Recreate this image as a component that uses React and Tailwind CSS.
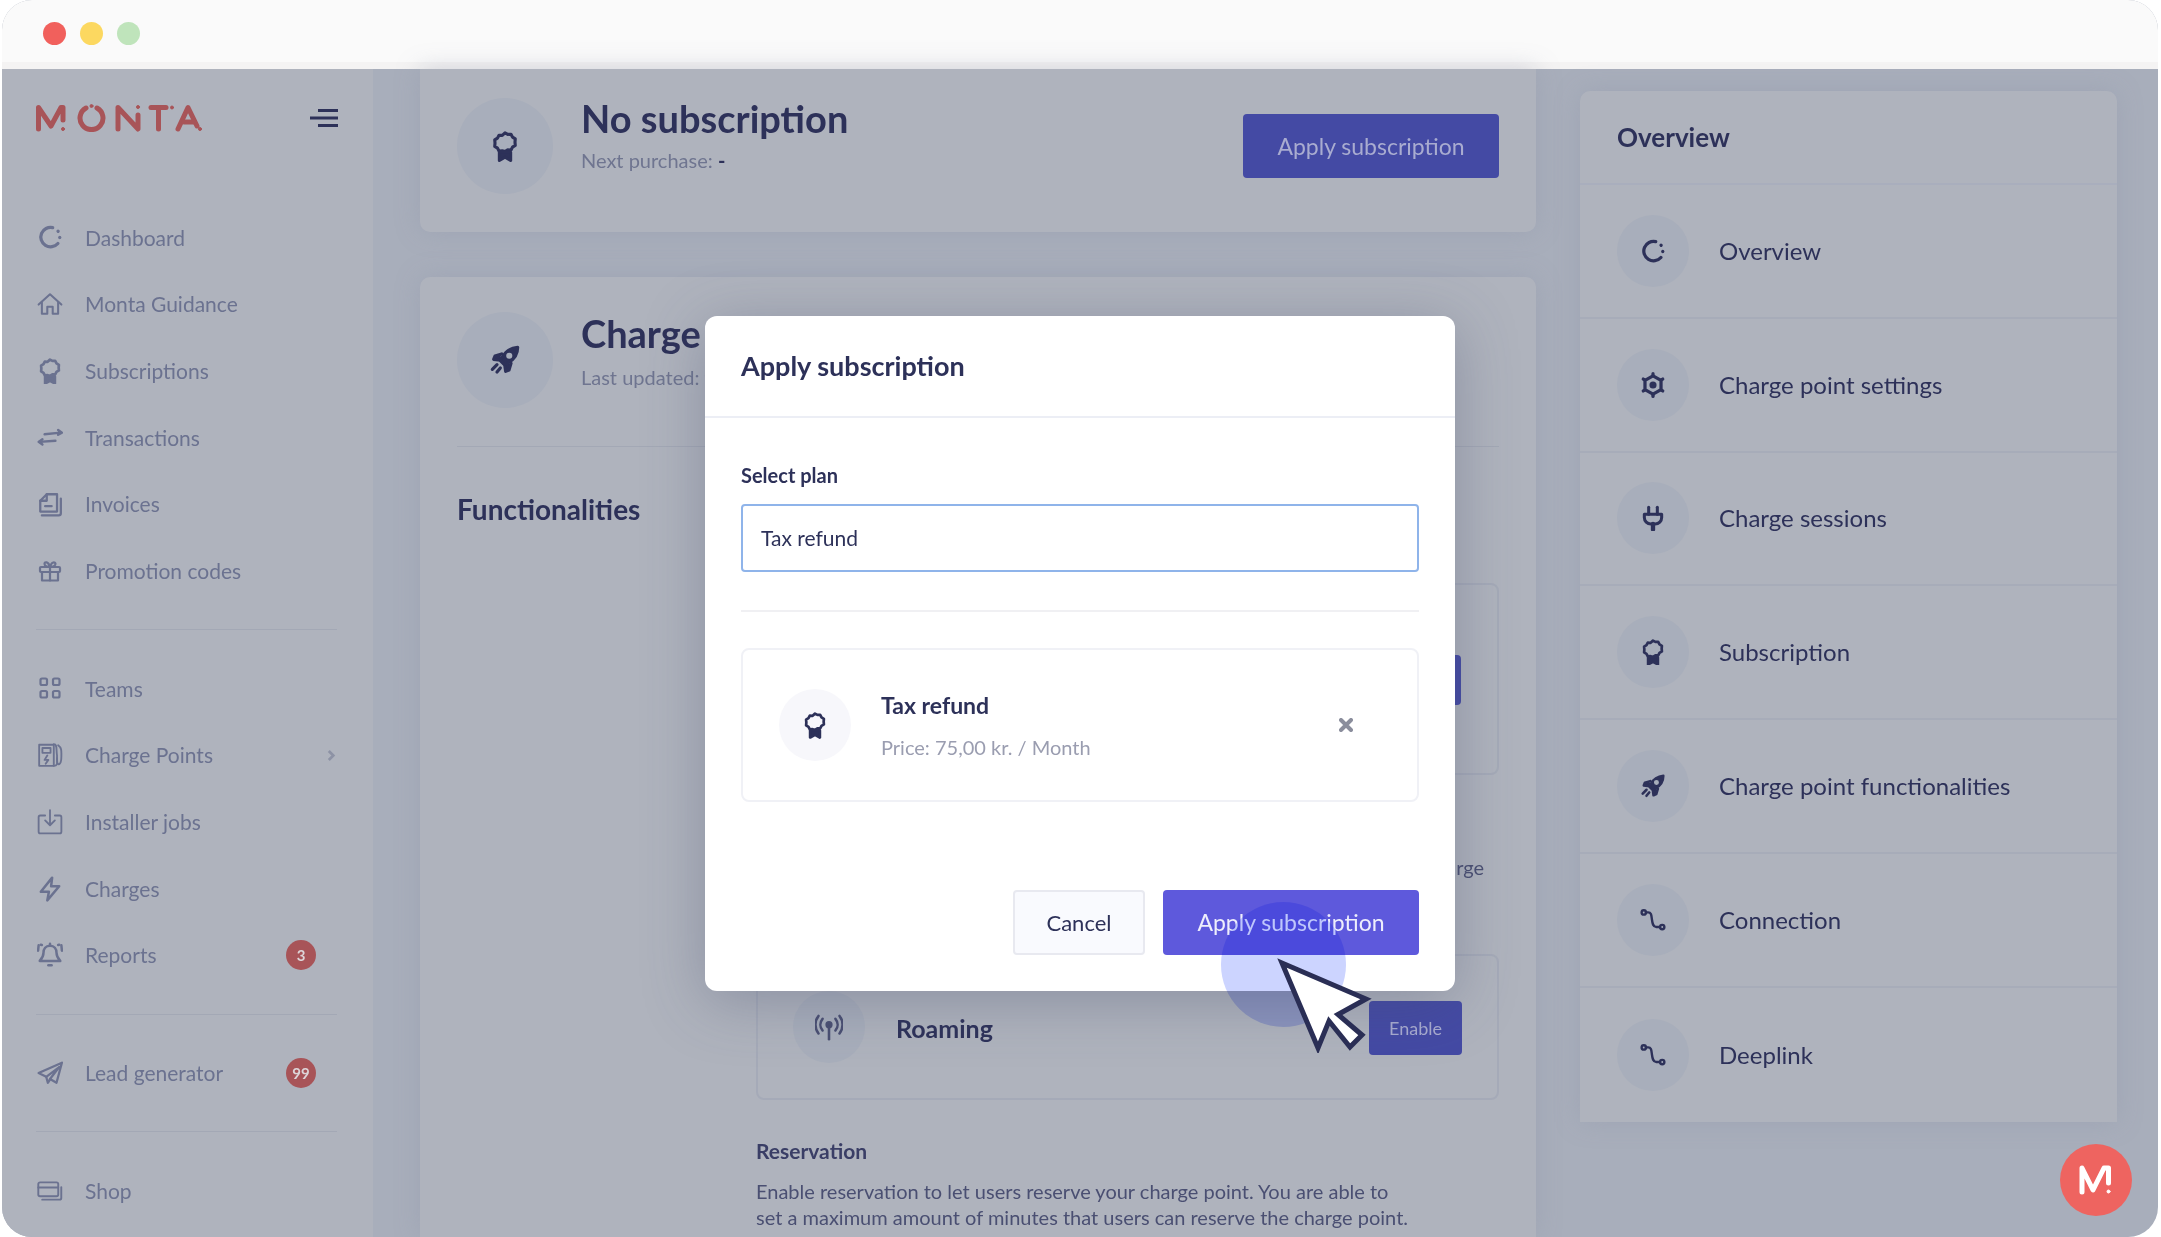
import React from "react";

const Svg = ({ className = "w-7 h-7", children, sw = 2.4, vb = "0 0 24 24" }) => (
  <svg viewBox={vb} className={className} fill="none" stroke="currentColor" strokeWidth={sw} strokeLinecap="round" strokeLinejoin="round">
    {children}
  </svg>
);

const DashIcon = (p) => (
  <Svg {...p} sw={3}>
    <path d="M14.5 3.3A9 9 0 1 0 19.3 18" />
    <path d="M19.4 6.6l.1.1" />
    <path d="M21 12.4v.1" />
  </Svg>
);
const HouseIcon = (p) => (
  <Svg {...p} sw={1.9}>
    <path d="M1.5 12.5 12 3l10.5 9.5" />
    <path d="M4.5 10.5V21h5v-6.5h5V21h5V10.5" />
  </Svg>
);
const BadgeIcon = (p) => (
  <Svg {...p} sw={2.5}>
    <path d="M12 2l2.2 1.2 2.6-.1 1.2 2.3 2.2 1.4-.2 2.6.2 2.6-2.2 1.4-1.2 2.3-2.6-.1L12 17l-2.2-.6-2.6.1L6 14.200l-2.200-1.400.2-2.600-.2-2.600L6 6.200l1.200-2.300 2.600.1z" transform="translate(0 -0.500)" />
    <path d="M7.500 17v6.500l4.500-2.500 4.500 2.500V17z" fill="currentColor" />
  </Svg>
);
const ArrowsIcon = (p) => (
  <Svg {...p} sw={2.2}>
    <path d="M7 9.500l15-1.500" />
    <path d="M19.500 5.500 23 8l-3.500 2" fill="currentColor" />
    <path d="M17 15.500 2 16.500" />
    <path d="M5 14 1.500 16.500 5 19" fill="currentColor" />
  </Svg>
);
const InvoiceIcon = (p) => (
  <Svg {...p} sw={2.100}>
    <path d="M3 17V9l6-6h9.500v16H3z" />
    <path d="M9 3v6H3" />
    <path d="M7.500 14h6" />
    <path d="M22 7v13.500a2 2 0 0 1-2 2H4.500" />
  </Svg>
);
const GiftIcon = (p) => (
  <Svg {...p} sw={2.200}>
    <rect x="2" y="8" width="20" height="5" rx="1" />
    <path d="M4 13v8.500h16V13" />
    <path d="M12 8v13.500" />
    <path d="M12 8C9 8 6.500 7 6.500 4.800S10.500 2 12 8c1.500-6 5.500-5 5.500-3.200S15 8 12 8z" />
  </Svg>
);
const GridIcon = (p) => (
  <Svg {...p} sw={2.200}>
    <rect x="2.500" y="2.500" width="6.500" height="6.500" rx="1.500" />
    <rect x="15" y="2.500" width="6.500" height="6.500" rx="1.500" />
    <rect x="2.500" y="15" width="6.500" height="6.500" rx="1.500" />
    <rect x="15" y="15" width="6.500" height="6.500" rx="1.500" />
  </Svg>
);
const PumpIcon = (p) => (
  <Svg {...p} sw={1.700}>
    <path d="M2 22V2.500h13.500V22z" />
    <rect x="5" y="5.500" width="7.500" height="4.500" />
    <path d="M9.500 12.500 7 16.500h3.500L8 20" />
    <path d="M15.500 2c3.500 0 2 5 3 10.500 0 3-.5 8 1.500 8s2.500-3 2.500-7.500S23 5.500 19.500 3" />
    <path d="M18.500 15c0 4 1 7-3 7" />
  </Svg>
);
const InstallIcon = (p) => (
  <Svg {...p} sw={1.700}>
    <path d="M7.500 6H3a1.500 1.500 0 0 0-1.500 1.500V21A1.500 1.500 0 0 0 3 22.500h18a1.500 1.500 0 0 0 1.500-1.500V7.500A1.500 1.500 0 0 0 21 6h-4.500" />
    <path d="M12 1v13" />
    <path d="M7.500 10.500 12 15l4.500-4.500" />
  </Svg>
);
const BoltIcon = (p) => (
  <Svg {...p} sw={2.300}>
    <path d="M14 1.500 3.500 14.500H11L9.500 22.500 20.500 9.500H13z" />
  </Svg>
);
const BellIcon = (p) => (
  <Svg {...p} sw={2.300}>
    <path d="M12 3.500c-4 0-6 3-6 6.500 0 4-1.500 5.500-3.500 7.500h19c-2-2-3.500-3.500-3.500-7.500 0-3.500-2-6.500-6-6.500z" />
    <path d="M12 1.500v2" />
    <path d="M10.500 21.500h3" />
    <path d="M1.500 3 1 8" />
    <path d="M22.500 3l.5 5" />
    <path d="M3.500 2.500l1 .2" />
    <path d="M20.500 2.500l-1 .2" />
  </Svg>
);
const SendIcon = (p) => (
  <Svg {...p} sw={2.100}>
    <path d="M23 2.500 1.500 12l7 3.500 12-9-8.500 11 6 3.500z" />
    <path d="M8.500 15.500 10 21l2-3" />
  </Svg>
);
const ShopIcon = (p) => (
  <Svg {...p} sw={2.200} vb="0 0 30 24">
    <rect x="1.500" y="2" width="23" height="16" rx="2" />
    <path d="M1.500 8h23" />
    <path d="M28 7.500V20a2 2 0 0 1-2 2H6" />
  </Svg>
);
const RocketIcon = (p) => (
  <Svg {...p} sw={2.400}>
    <path d="M21.500 2.500c-5 .5-9 3-11.500 7.500L7 11l6 6 1.500-3c4.500-2.500 7-6.500 7-11.500z" fill="currentColor" />
    <circle cx="15.200" cy="8.800" r="1.100" stroke="#a8aebb" fill="#a8aebb" />
    <path d="M9.500 7.500 4.500 9l-1 2.500 3.500.5" fill="currentColor" sw="1" />
    <path d="M16.500 14.500 15 19.500l-2.500 1-.5-3.500" fill="currentColor" />
    <path d="M6 15.500 2.500 19" />
    <path d="M8.500 18 6 21" />
  </Svg>
);
const GearIcon = (p) => (
  <Svg {...p} sw={3}>
    <path d="M12 3.500l7.400 4.300v8.400L12 20.500l-7.400-4.300V7.800z" />
    <circle cx="12" cy="12" r="1.800" fill="currentColor" sw="1" />
    <path d="M12 1.500v1" />
    <path d="M12 21.500v1" />
    <path d="M3 6.500l1 .6" />
    <path d="M21 6.500l-1 .6" />
    <path d="M3 17.500l1-.6" />
    <path d="M21 17.500l-1-.6" />
  </Svg>
);
const PlugIcon = (p) => (
  <Svg {...p} sw={2.800}>
    <path d="M8 2v6.500" />
    <path d="M16 2v6.500" />
    <path d="M4 8.500h16v3a6 6 0 0 1-6 6h-4a6 6 0 0 1-6-6z" />
    <path d="M12 17.500v5" strokeWidth="4" />
  </Svg>
);
const RouteIcon = (p) => (
  <Svg {...p} sw={2.200}>
    <circle cx="3.500" cy="5" r="2" />
    <circle cx="20.500" cy="18.500" r="2" />
    <path d="M5.500 5h2c3 0 3 2.500 3.500 6.500.5 4 1 7 4 7h3.500" />
  </Svg>
);
const RadioIcon = (p) => (
  <Svg {...p} sw={2.200}>
    <circle cx="12" cy="10" r="2" fill="currentColor" />
    <path d="M12 12v10.500" />
    <path d="M6.500 5c-2.500 3-2.500 7 0 10" />
    <path d="M17.500 5c2.500 3 2.500 7 0 10" />
    <path d="M3 2.500c-3.500 4.500-3.500 10.500 0 15" />
    <path d="M21 2.500c3.500 4.500 3.500 10.500 0 15" />
  </Svg>
);

const Logo = () => (
  <svg viewBox="0 0 166 28" className="w-[166px] h-[28px]" fill="none" stroke="#a85458" strokeWidth="5" strokeLinecap="round" strokeLinejoin="round">
    <path d="M2.500 25V3.500L15 22 25 3.500 27 3.500V16" />
    <circle cx="27" cy="25" r="1.500" fill="#a85458" strokeWidth="1" />
    <path d="M50 4a11.500 11.500 0 1 0 11 0" />
    <circle cx="55.500" cy="2" r="1.500" fill="#a85458" strokeWidth="1" />
    <path d="M82 25V3.500L102 25V11" />
    <circle cx="102" cy="3" r="1.500" fill="#a85458" strokeWidth="1" />
    <path d="M115 3.500h15" />
    <circle cx="136" cy="3.500" r="1.500" fill="#a85458" strokeWidth="1" />
    <path d="M122.500 3.500V25" />
    <path d="M142 25 152 3.500 161 22" />
    <path d="M148 18h10" />
    <circle cx="164" cy="25" r="1.500" fill="#a85458" strokeWidth="1" />
  </svg>
);

const NavRow = ({ icon: I, label, right, cls = "w-[26px] h-[26px]" }) => (
  <div className="flex items-center h-[66.7px] text-[#6b7290] text-[21px]">
    <div className="w-[28px] flex items-center justify-center shrink-0"><I className={cls} /></div>
    <span className="ml-[21px]">{label}</span>
    {right}
  </div>
);

const Count = ({ n }) => (
  <span className="ml-auto mr-[21px] w-[30px] h-[30px] rounded-full bg-[#a85458] text-[#ddd5d8] text-[15px] font-bold flex items-center justify-center">{n}</span>
);

const Sep = () => <div className="h-px bg-[#a3a8b5] my-[25px]" />;

const Circle = ({ size = "w-[72px] h-[72px]", bg = "bg-[#a8aebb]", children }) => (
  <div className={`${size} ${bg} rounded-full flex items-center justify-center shrink-0`}>{children}</div>
);

const overview = [
  [DashIcon, "Overview"],
  [GearIcon, "Charge point settings"],
  [PlugIcon, "Charge sessions"],
  [BadgeIcon, "Subscription"],
  [RocketIcon, "Charge point functionalities"],
  [RouteIcon, "Connection"],
  [RouteIcon, "Deeplink"],
];

export default function App() {
  return (
    <div className="relative w-[2161px] h-[1237px] overflow-hidden bg-white [font-family:Lato,sans-serif]">
      <div className="ml-[2px] w-[2156px] h-[1237px] rounded-[30px] overflow-hidden flex flex-col bg-[#a8aebb]">
        <div className="h-[62px] bg-[#fafafa] flex items-center pl-[41px] gap-[14px] pt-[5px] shrink-0">
          <span className="w-[23px] h-[23px] rounded-full bg-[#f1605c]" />
          <span className="w-[23px] h-[23px] rounded-full bg-[#fcd860]" />
          <span className="w-[23px] h-[23px] rounded-full bg-[#bfe4bb]" />
        </div>
        <div className="h-[7px] bg-[#f4f3f3] shrink-0" />

        <div className="flex flex-1 min-h-0">
          <aside className="w-[371px] bg-[#afb3bd] pl-[34px] pr-[36px] shrink-0">
            <div className="flex items-center justify-between h-[135px] pb-[38px]">
              <Logo />
              <svg viewBox="0 0 28 20" className="w-[28px] h-[20px] mr-[-1px]" stroke="#2d3159" strokeWidth="3">
                <path d="M8 2.500h20" />
                <path d="M0 10h28" />
                <path d="M8 17.500h20" />
              </svg>
            </div>
            <NavRow icon={DashIcon} label="Dashboard" />
            <NavRow icon={HouseIcon} label="Monta Guidance" />
            <NavRow icon={BadgeIcon} label="Subscriptions" />
            <NavRow icon={ArrowsIcon} label="Transactions" />
            <NavRow icon={InvoiceIcon} label="Invoices" />
            <NavRow icon={GiftIcon} label="Promotion codes" cls="w-[24px] h-[24px]" />
            <Sep />
            <NavRow icon={GridIcon} label="Teams" cls="w-[24px] h-[24px]" />
            <NavRow
              icon={PumpIcon}
              label="Charge Points"
              right={
                <svg viewBox="0 0 10 14" className="ml-auto w-[9px] h-[13px] mr-[1px]" fill="none" stroke="#8d92a5" strokeWidth="3"><path d="M2 2l5 5-5 5" /></svg>
              }
            />
            <NavRow icon={InstallIcon} label="Installer jobs" />
            <NavRow icon={BoltIcon} label="Charges" />
            <NavRow icon={BellIcon} label="Reports" right={<Count n="3" />} />
            <Sep />
            <NavRow icon={SendIcon} label="Lead generator" right={<Count n="99" />} />
            <Sep />
            <NavRow icon={ShopIcon} label="Shop" />
          </aside>

          <main className="w-[1163px] pl-[47px] shrink-0 flex flex-col">
            <section className="h-[163px] bg-[#afb3bd] rounded-b-[10px] px-[37px] pt-[29px] flex items-start shrink-0 shadow-[0_0_24px_rgba(140,146,165,0.35)]">
              <Circle size="w-[96px] h-[96px]"><BadgeIcon className="w-[30px] h-[32px] text-[#2d3159]" /></Circle>
              <div className="ml-[28px]">
                <h1 className="text-[38px] leading-[44px] mt-[-2px] font-bold text-[#2d3159]">No subscription</h1>
                <p className="text-[20px] mt-[5px] text-[#6f7590]">Next purchase: <b className="text-[#2d3159]">-</b></p>
              </div>
              <button className="ml-auto mt-[16px] w-[256px] h-[64px] rounded-[4px] bg-[#444aa4] text-[#a9acd0] text-[23px]">Apply subscription</button>
            </section>

            <section className="mt-[45px] flex-1 bg-[#afb3bd] rounded-t-[10px] px-[37px] pt-[35px] shadow-[0_0_24px_rgba(140,146,165,0.35)]">
              <div className="flex items-start h-[96px]">
                <Circle size="w-[96px] h-[96px]"><RocketIcon className="w-[32px] h-[32px] text-[#2d3159]" /></Circle>
                <div className="ml-[28px]">
                  <h2 className="text-[38px] leading-[44px] font-bold text-[#2d3159] mt-[-1px]">Charge point functionalities</h2>
                  <p className="text-[20px] mt-[7px] text-[#6f7590]">Last updated: today</p>
                </div>
              </div>
              <div className="h-px bg-[#a3a8b5] mt-[38px]" />
              <div className="flex mt-[44px]">
                <h3 className="w-[299px] shrink-0 text-[28px] leading-[36px] font-bold text-[#2d3159]">Functionalities</h3>
                <div className="flex-1 pt-[92px]">
                  <div className="h-[192px] border-2 border-[#a5aab8] rounded-[8px] flex items-end justify-end pr-[36px] pb-[68px]">
                    <div className="w-[93px] h-[50px] rounded-[4px] bg-[#444aa4]" />
                  </div>
                  <p className="mt-[79px] h-[26px] leading-[26px] text-[20px] text-[#4a4f72] text-right pr-[15px]">Allow users to start a charge</p>
                  <div className="mt-[74px] h-[146px] border-2 border-[#a5aab8] rounded-[8px] relative">
                    <div className="absolute left-[35px] top-[35px]">
                      <Circle><RadioIcon className="w-[28px] h-[28px] text-[#4a4f72]" /></Circle>
                    </div>
                    <span className="absolute left-[138px] top-[56px] text-[25px] leading-[32px] font-bold text-[#2d3159]">Roaming</span>
                    <span className="absolute right-[35px] top-[45px] w-[93px] h-[54px] rounded-[4px] bg-[#444aa4] text-[#a9acd0] text-[18px] flex items-center justify-center">Enable</span>
                  </div>
                  <h4 className="mt-[38px] text-[21px] leading-[26px] font-bold text-[#3a3e66]">Reservation</h4>
                  <p className="mt-[14px] text-[20px] leading-[26px] text-[#4a4f72] whitespace-nowrap">Enable reservation to let users reserve your charge point. You are able to<br />set a maximum amount of minutes that users can reserve the charge point.</p>
                </div>
              </div>
            </section>
          </main>

          <div className="ml-[44px] mt-[22px] w-[537px] self-start bg-[#afb3bd] rounded-t-[10px] text-[#2d3159] shrink-0 shadow-[0_0_24px_rgba(140,146,165,0.35)]">
            <div className="h-[94px] pl-[37px] flex items-center text-[26px] font-bold border-b-2 border-[#a9aebd]">Overview</div>
            {overview.map(([I, label], i) => (
              <div key={label} className={`h-[133.8px] pl-[37px] flex items-center text-[24px] ${i < overview.length - 1 ? "border-b-2 border-[#a7acb9]" : ""}`}>
                <Circle><I className="w-[26px] h-[26px]" /></Circle>
                <span className="ml-[30px]">{label}</span>
              </div>
            ))}
          </div>
        </div>
      </div>

      {/* modal */}
      <div className="absolute left-[705px] top-[316px] w-[750px] h-[675px] bg-white rounded-[12px] shadow-[0_10px_60px_rgba(70,76,110,0.35)] text-[#2d3159]">
        <div className="h-[102px] border-b-2 border-[#eceef5] px-[36px] flex items-center text-[27px] font-bold">Apply subscription</div>
        <div className="px-[36px] pt-[45px]">
          <div className="text-[20px] leading-[24px] font-bold">Select plan</div>
          <div className="mt-[17px] h-[68px] border-2 border-[#8fb4ea] rounded-[4px] pl-[18px] flex items-center text-[21px]">Tax refund</div>
          <div className="mt-[38px] h-[2px] bg-[#f0f0f3]" />
          <div className="mt-[36px] h-[154px] border-2 border-[#f0f1f6] rounded-[8px] flex items-center pl-[36px] pr-[64px]">
            <Circle bg="bg-[#f7f7fb]"><BadgeIcon className="w-[26px] h-[28px]" /></Circle>
            <div className="ml-[30px]">
              <div className="text-[23px] leading-[30px] font-bold">Tax refund</div>
              <div className="text-[20px] leading-[26px] mt-[14px] text-[#9a9db0]">Price: 75,00 kr. / Month</div>
            </div>
            <svg viewBox="0 0 14 14" className="ml-auto w-[14px] h-[14px]" stroke="#8a8d9c" strokeWidth="4" strokeLinecap="round"><path d="M2 2l10 10M12 2 2 12" /></svg>
          </div>
          <div className="mt-[88px] flex justify-end gap-[18px]">
            <button className="w-[132px] h-[65px] rounded-[4px] bg-[#f9fafe] border-2 border-[#e8e9f0] text-[22px]">Cancel</button>
            <button className="w-[256px] h-[65px] rounded-[4px] bg-[#5e59dc] text-[#eeeefc] text-[23px]">Apply subscription</button>
          </div>
        </div>
      </div>

      {/* pointer */}
      <div className="absolute left-[1221px] top-[902px] w-[125px] h-[125px] rounded-full bg-[#ccd4ff] mix-blend-multiply" />
      <svg viewBox="0 0 100 100" className="absolute left-[1272px] top-[953px] w-[100px] h-[100px]" fill="#fff" stroke="#2a2e55" strokeWidth="5">
        <path d="M10 10 94 46 66 61.500 90 82 78 94 57 68 46 95z" />
      </svg>

      {/* chat bubble */}
      <div className="absolute left-[2060px] top-[1144px] w-[72px] h-[72px] rounded-full bg-[#ee6460] flex items-center justify-center">
        <svg viewBox="0 0 34 30" className="w-[34px] h-[30px]" fill="none" stroke="#fff" strokeWidth="5" strokeLinejoin="round" strokeLinecap="round">
          <path d="M3 27V3l11 22L25 3 29.500 3 29.500 18" />
          <circle cx="29.500" cy="26.500" r="1.500" fill="#fff" strokeWidth="1" />
        </svg>
      </div>
    </div>
  );
}
